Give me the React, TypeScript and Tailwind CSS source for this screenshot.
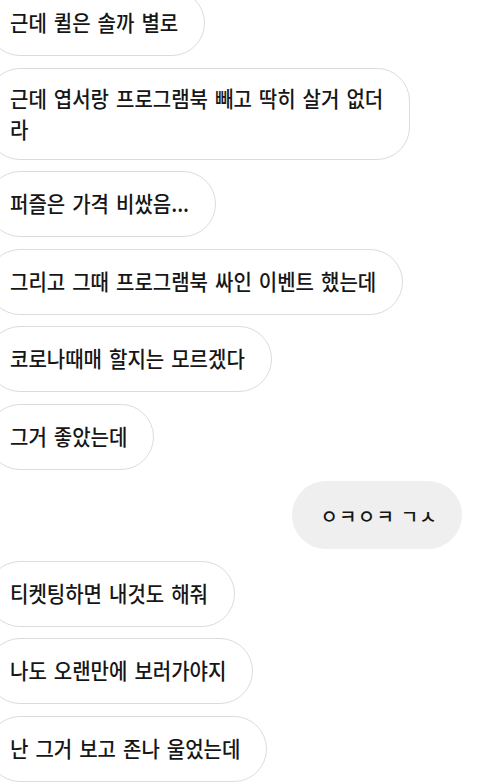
import React from "react";

function Bubble({ children }: { children: React.ReactNode }) {
  return (
    <div className="-ml-[13px] flex min-h-[66px] items-center rounded-[33px] border-[1.5px] border-[#dcdcdc] bg-white py-[15px] pl-[22px] pr-[26px]">
      <span className="inline-block origin-center scale-y-[1.06] text-[20px] font-medium leading-[30.2px] [word-spacing:2.5px] text-[#161616]">
        {children}
      </span>
    </div>
  );
}

export default function App() {
  return (
    <div
      className="h-[782px] w-[480px] overflow-hidden bg-white"
      style={{ fontFamily: '"Noto Sans CJK KR", "Noto Sans", sans-serif' }}
    >
      <div className="-mt-[10px] flex flex-col items-start gap-[11.5px]">
        <Bubble>근데 퀼은 솔까 별로</Bubble>
        <Bubble>
          근데 엽서랑 프로그램북 빼고 딱히 살거 없더
          <br />라
        </Bubble>
        <Bubble>퍼즐은 가격 비쌌음...</Bubble>
        <Bubble>그리고 그때 프로그램북 싸인 이벤트 했는데</Bubble>
        <Bubble>코로나때매 할지는 모르겠다</Bubble>
        <Bubble>그거 좋았는데</Bubble>
        <div className="mr-[18px] flex h-[68px] items-center self-end rounded-[34px] bg-[#efefef] pl-[28px] pr-[24px]">
          <span className="inline-block text-[19px] font-medium leading-[27px] tracking-[1.2px] text-[#161616]">
            ㅇㅋㅇㅋ ㄱㅅ
          </span>
        </div>
        <Bubble>티켓팅하면 내것도 해줘</Bubble>
        <Bubble>나도 오랜만에 보러가야지</Bubble>
        <Bubble>난 그거 보고 존나 울었는데</Bubble>
      </div>
    </div>
  );
}
